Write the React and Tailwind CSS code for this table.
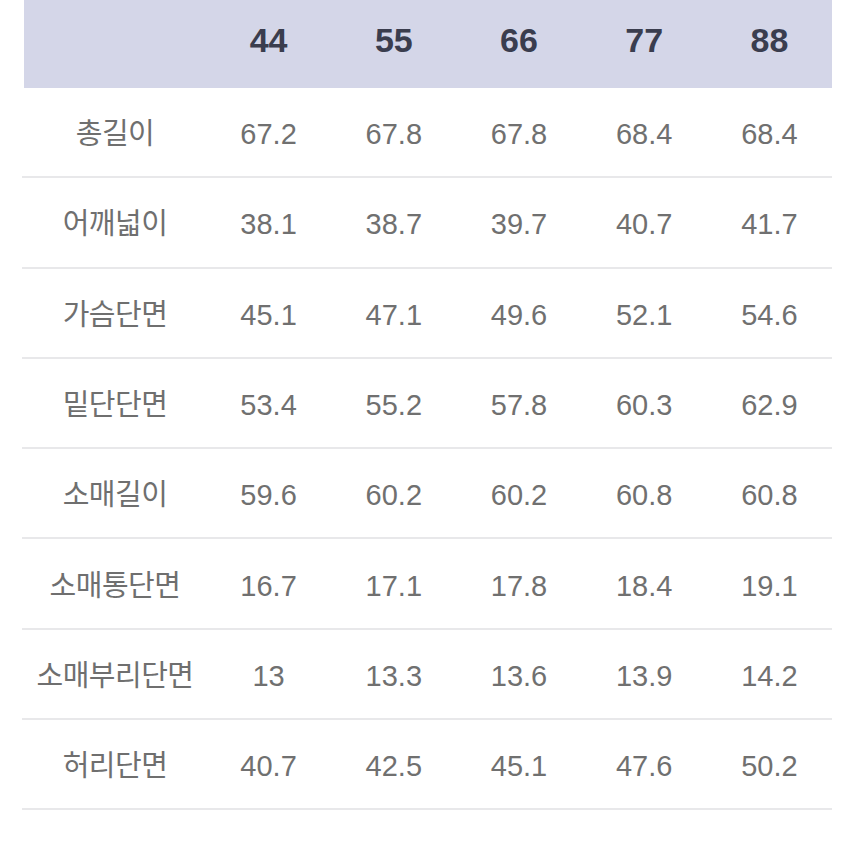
import React from 'react';

const sizes = ['44', '55', '66', '77', '88'];

const rows = [
  { label: '총길이', values: ['67.2', '67.8', '67.8', '68.4', '68.4'] },
  { label: '어깨넓이', values: ['38.1', '38.7', '39.7', '40.7', '41.7'] },
  { label: '가슴단면', values: ['45.1', '47.1', '49.6', '52.1', '54.6'] },
  { label: '밑단단면', values: ['53.4', '55.2', '57.8', '60.3', '62.9'] },
  { label: '소매길이', values: ['59.6', '60.2', '60.2', '60.8', '60.8'] },
  { label: '소매통단면', values: ['16.7', '17.1', '17.8', '18.4', '19.1'] },
  { label: '소매부리단면', values: ['13', '13.3', '13.6', '13.9', '14.2'] },
  { label: '허리단면', values: ['40.7', '42.5', '45.1', '47.6', '50.2'] },
];

const font = { fontFamily: '"Liberation Sans", "Noto Sans CJK KR", sans-serif' };

export default function App() {
  return (
    <div className="w-[856px] h-[856px] bg-white overflow-hidden" style={font}>
      <div className="ml-[24px] w-[808px]">
        {/* Header */}
        <div className="grid grid-cols-[182px_repeat(5,1fr)] h-[88px] pb-[8px] bg-[#d4d6e8] items-center">
          <div />
          {sizes.map((s) => (
            <div key={s} className="text-center text-[34px] leading-none font-bold text-[#3a3d4e]">
              {s}
            </div>
          ))}
        </div>

        {/* Rows */}
        {rows.map((row) => (
          <div
            key={row.label}
            className="grid grid-cols-[182px_repeat(5,1fr)] h-[90.3px] pt-[5px] items-center border-b-2 border-[#e8e8ea] -ml-[2px] pl-[2px]"
          >
            <div className="text-center text-[29px] leading-none text-[#6f6f6f] tracking-[-0.5px] whitespace-nowrap">
              {row.label}
            </div>
            {row.values.map((v, i) => (
              <div key={i} className="text-center text-[29px] leading-none text-[#707070]">
                {v}
              </div>
            ))}
          </div>
        ))}
      </div>
    </div>
  );
}
